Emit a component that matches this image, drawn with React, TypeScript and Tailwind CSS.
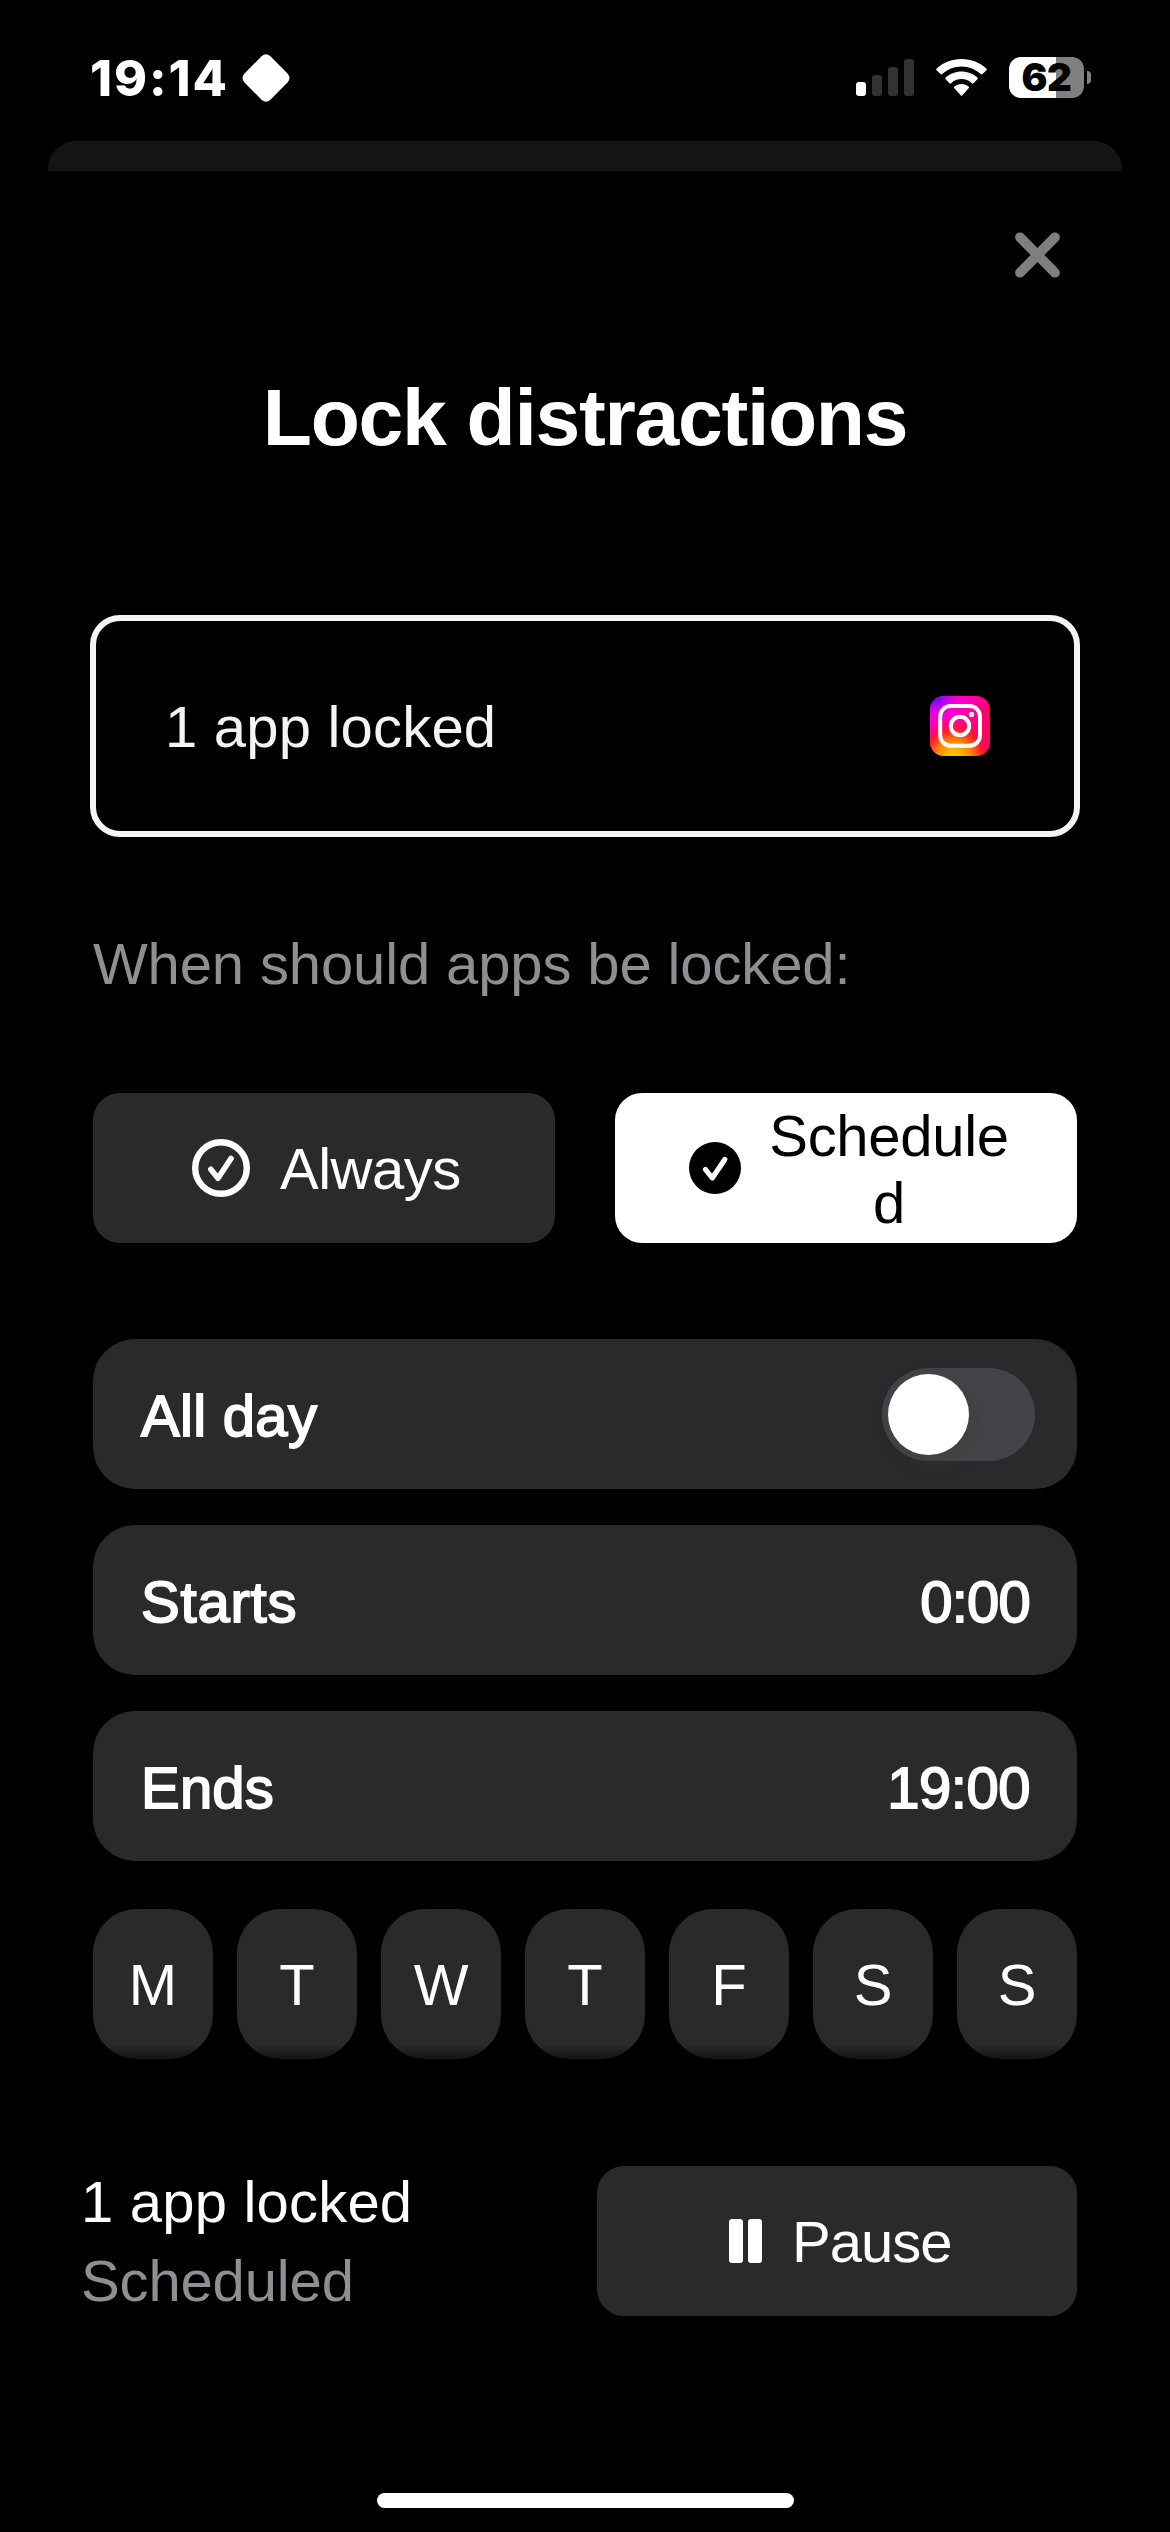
import React from "react";

const card =
  "flex h-[150px] items-center justify-between rounded-[42px] bg-[#2a2a2c] pl-12 pr-[47px] [-webkit-text-stroke:1.8px_white]";

function StatusBar() {
  return (
    <header className="flex h-[141px] items-start justify-between pl-[90px] pr-[79px]">
      <div className="flex h-[155px] items-center">
        <span className="w-[152px] whitespace-nowrap font-['Inter'] text-[50px] font-extrabold leading-none tracking-[1.900px]">
          19:14
        </span>
        <svg width="48" height="48" viewBox="0 0 48 48" fill="white">
          <path d="M19.6 2.2Q24 -1.6 28.400 2.200L45.500 19.500Q49.500 24 45.500 28.500L28.400 45.800Q24 49.600 19.600 45.800L2.500 28.500Q-1.500 24 2.500 19.500Z" />
        </svg>
      </div>
      <div className="flex h-[155px] items-center">
        <div className="flex h-[37px] items-end gap-1.5">
          <i className="h-3.5 w-2.5 rounded-[3px] bg-white" />
          <i className="h-[21px] w-2.5 rounded-[3px] bg-[#333]" />
          <i className="h-[29px] w-2.5 rounded-[3px] bg-[#333]" />
          <i className="h-[37px] w-2.5 rounded-[3px] bg-[#333]" />
        </div>
        <svg className="ml-[22px]" width="51" height="37" viewBox="0 0 51 37" fill="white">
          <path d="M0.600 11.200a1.200 1.200 0 0 1 0-1.600C7 3.500 15.800 0 25.500 0s18.500 3.500 24.900 9.600a1.200 1.200 0 0 1 0 1.600l-3.900 3.900a1.200 1.200 0 0 1-1.700 0C39.700 10.500 33 7.500 25.500 7.500S11.300 10.500 6.200 15.100a1.200 1.200 0 0 1-1.700 0z" />
          <path d="M9.600 20.200a1.200 1.200 0 0 1 0-1.700C13.700 14.900 19.300 12.500 25.500 12.500s11.800 2.400 15.900 6a1.200 1.200 0 0 1 0 1.700l-3.900 4a1.200 1.200 0 0 1-1.700 0C33 21.600 29.400 20.100 25.500 20.100s-7.500 1.500-10.300 4.100a1.200 1.200 0 0 1-1.700 0z" />
          <path d="M18.400 29.300a1.200 1.200 0 0 1 0-1.700C20.300 26 22.800 25.100 25.500 25.100s5.200.9 7.100 2.500a1.200 1.200 0 0 1 0 1.700l-6.200 6.900a1.200 1.200 0 0 1-1.800 0z" />
        </svg>
        <div className="ml-[22px] flex h-[41px] w-[75px] items-center justify-center rounded-[12px] bg-[linear-gradient(90deg,white_47px,#808080_47px)] font-['Inter'] text-[38.500px] font-black leading-none tracking-[-0.500px] text-black">
          62
        </div>
        <i className="ml-[3px] h-[13px] w-1 rounded-r-full bg-[#808080]" />
      </div>
    </header>
  );
}

function InstagramIcon() {
  return (
    <svg width="60" height="60" viewBox="0 0 60 60">
      <defs>
        <linearGradient id="ig-base" x1="0" y1="0" x2="1" y2="0.6">
          <stop offset="0" stopColor="#ff00d0" />
          <stop offset="0.45" stopColor="#ff00c0" />
          <stop offset="0.85" stopColor="#ff0066" />
        </linearGradient>
        <radialGradient id="ig-warm" gradientUnits="userSpaceOnUse" cx="24" cy="62" r="42">
          <stop offset="0.1" stopColor="#ffc800" />
          <stop offset="0.4" stopColor="#ff8a00" />
          <stop offset="0.68" stopColor="#ff1a30" />
          <stop offset="1" stopColor="#ff0080" stopOpacity="0" />
        </radialGradient>
        <radialGradient id="ig-violet" gradientUnits="userSpaceOnUse" cx="6" cy="1" r="26">
          <stop offset="0.15" stopColor="#7a08ff" />
          <stop offset="1" stopColor="#f000f0" stopOpacity="0" />
        </radialGradient>
      </defs>
      <rect width="60" height="60" rx="14" fill="url(#ig-base)" />
      <rect width="60" height="60" rx="14" fill="url(#ig-warm)" />
      <rect width="60" height="60" rx="14" fill="url(#ig-violet)" />
      <g fill="none" stroke="white" strokeWidth="4">
        <rect x="10.200" y="10" width="39.800" height="39.800" rx="10.500" />
        <circle cx="30" cy="30" r="9.200" />
      </g>
      <circle cx="41.500" cy="18.400" r="2.700" fill="white" />
    </svg>
  );
}

export default function App() {
  return (
    <div className="flex h-[2532px] w-[1170px] flex-col overflow-hidden bg-black font-['Liberation_Sans',Arial,sans-serif] text-[58px] leading-[67px] text-white">
      <StatusBar />
      <div className="mx-12 h-[30px] shrink-0 rounded-t-[28px] bg-[#141414]" />

      <main className="flex flex-col px-[93px]">
        <div className="flex justify-end pr-[17px] pt-[61px]">
          <svg width="45" height="46" viewBox="0 0 45 46" stroke="#7f7f7f" strokeWidth="9.800" strokeLinecap="round">
            <path d="M5 5.300L40 40.700M40 5.300L5 40.700" />
          </svg>
        </div>

        <h1 className="mt-[93px] whitespace-nowrap text-center text-[80.500px] font-bold leading-[92px] tracking-[-1.300px]">
          Lock distractions
        </h1>

        <section className="-mx-[3px] mt-[152px] flex h-[222px] items-center justify-between rounded-[30px] border-[6px] border-[#f4f4f4] pl-[69px] pr-[84px] text-[#f4f4f4]">
          <span className="tracking-[0.200px]">1 app locked</span>
          <InstagramIcon />
        </section>

        <p className="mt-[93px] whitespace-nowrap tracking-[-0.130px] text-[#8e8e93]">When should apps be locked:</p>

        <div className="mt-[96px] grid grid-cols-2 gap-[60px]">
          <button className="flex h-[150px] items-center rounded-[27px] bg-[#2a2a2c] pl-[99px]">
            <svg width="58" height="58" viewBox="0 0 58 58" fill="none" stroke="white" strokeLinecap="round" strokeLinejoin="round">
              <circle cx="29" cy="29" r="25.800" strokeWidth="6.400" />
              <path d="M18.800 30.300L26 39.300L39 19.500" strokeWidth="5.600" />
            </svg>
            <span className="ml-[30px] tracking-[-0.500px]">Always</span>
          </button>
          <button className="flex h-[150px] items-center rounded-[27px] bg-white pl-[74px] text-black">
            <svg width="52" height="52" viewBox="0 0 52 52" fill="none" stroke="white" strokeLinecap="round" strokeLinejoin="round">
              <circle cx="26" cy="26" r="26" fill="black" stroke="none" />
              <path d="M16.500 27.500L23.300 36L35.800 17.500" strokeWidth="5.200" />
            </svg>
            <span className="ml-[23px] w-[250px] break-all pt-px text-center tracking-[-0.300px]">Scheduled</span>
          </button>
        </div>

        <div className="mt-24 flex flex-col gap-9">
          <div className={card}>
            <span className="pt-0.5 tracking-[0.300px]">All day</span>
            <span className="-mr-[5px] flex h-[93px] w-[153px] items-center rounded-full bg-[#444448] p-1.5">
              <i className="size-[81px] rounded-full bg-white shadow-[6px_6px_16px_rgba(60,60,60,0.500)]" />
            </span>
          </div>
          <div className={card}>
            <span className="pt-0.5 tracking-[0.800px]">Starts</span>
            <span className="pt-0.5 tracking-[-0.800px]">0:00</span>
          </div>
          <div className={card}>
            <span className="pt-0.5 tracking-[0.200px]">Ends</span>
            <span className="pt-0.5 tracking-[-0.500px]">19:00</span>
          </div>
        </div>

        <div className="mt-12 grid grid-cols-7 gap-6">
          {["M", "T", "W", "T", "F", "S", "S"].map((day, i) => (
            <button
              key={i}
              className="flex h-[150px] items-center justify-center rounded-[44px] bg-[linear-gradient(#2a2a2c_136px,#151516_150px)]"
            >
              {day}
            </button>
          ))}
        </div>

        <footer className="mt-[107px] flex h-[150px] items-center justify-between">
          <div className="-ml-[12px] leading-[79px]">
            <p className="tracking-[0.200px]">1 app locked</p>
            <p className="tracking-[-0.150px] text-[#8e8e93]">Scheduled</p>
          </div>
          <button className="flex h-[150px] w-[480px] items-center rounded-[27px] bg-[#2a2a2c] pl-[132px]">
            <i className="h-11 w-3.5 rounded-[3px] bg-white" />
            <i className="ml-[5px] h-11 w-3.5 rounded-[3px] bg-white" />
            <span className="ml-[30px] tracking-[-1px]">Pause</span>
          </button>
        </footer>
      </main>

      <div className="mx-auto mb-6 mt-auto h-[15px] w-[417px] rounded-full bg-white" />
    </div>
  );
}
